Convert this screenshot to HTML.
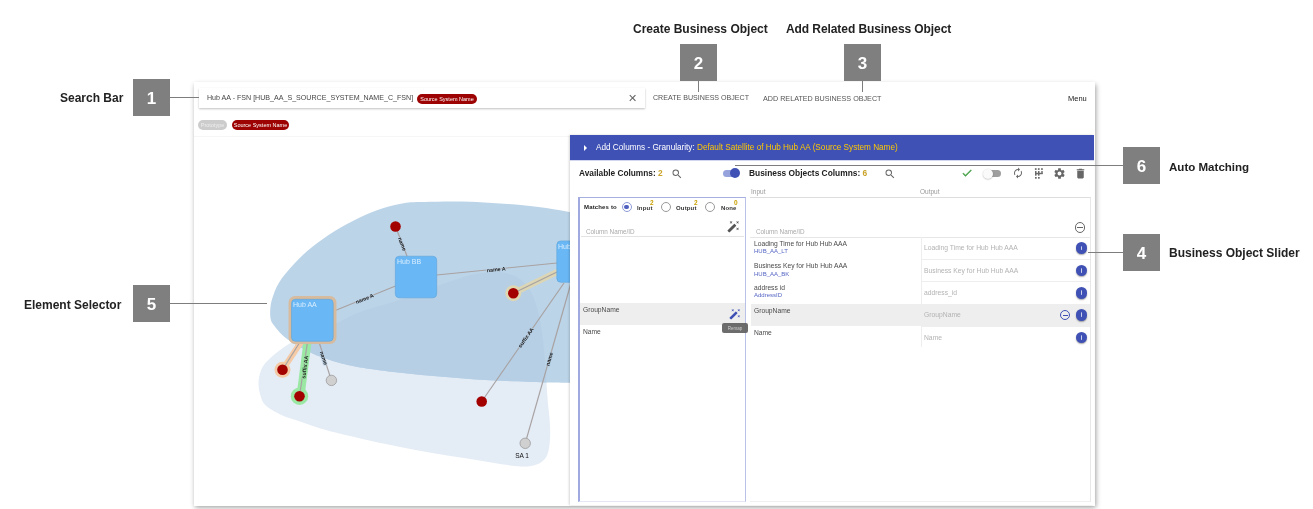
<!DOCTYPE html>
<html><head><meta charset="utf-8">
<style>
*{margin:0;padding:0;box-sizing:border-box}
html,body{width:1313px;height:509px;overflow:hidden;background:#fff;font-family:"Liberation Sans",sans-serif}
.a{position:absolute}
.lbl{position:absolute;will-change:transform;font-weight:bold;font-size:12px;color:#222;white-space:nowrap;line-height:14px}
.box{position:absolute;width:37px;height:37px;background:#7f7f7f;color:#fff;font-weight:bold;font-size:17px;line-height:39px;text-align:center;will-change:transform}
.hl{position:absolute;height:1px;background:#7d7d7d}
.vl{position:absolute;width:1px;background:#7d7d7d}
.t{position:absolute;white-space:nowrap;will-change:transform}
.dot{position:absolute;left:1076px;width:11.4px;height:11.4px;border-radius:50%;background:#3f51b5;box-shadow:0 1px 1.5px rgba(0,0,0,.35)}
.dot:after{content:"";position:absolute;left:5.2px;top:3.2px;width:0.9px;height:4.6px;background:rgba(255,255,255,.75);border-radius:.4px}
</style></head><body>

<!-- app frame -->
<div class="a" style="left:194px;top:82px;width:900.5px;height:423.5px;background:#fff;box-shadow:1px 1.5px 5px rgba(0,0,0,.38)"></div>

<!-- graph -->
<svg class="a" style="left:193px;top:81px;will-change:transform" width="901" height="424" viewBox="193 81 901 424">
<defs>
<clipPath id="dkc"><path d="M270.9,320.0 C270.2,317.4 270.0,314.2 270.2,310.7 C270.4,307.2 270.6,303.7 272.1,299.0 C273.6,294.3 275.6,288.2 279.1,282.5 C282.6,276.8 287.8,270.7 293.3,264.8 C298.8,258.9 305.0,252.8 312.1,247.1 C319.2,241.4 327.8,235.5 335.7,230.6 C343.6,225.7 351.4,221.4 359.3,217.7 C367.2,214.0 375.0,210.7 382.8,208.2 C390.6,205.7 399.4,203.9 406.4,202.8 C413.4,201.8 414.4,202.1 425.0,201.9 C435.6,201.7 452.5,201.1 470.0,201.8 C487.5,202.5 512.5,204.1 530.0,206.0 C547.5,207.9 560.0,210.3 575.0,213.0 C590.0,215.7 612.5,193.5 620.0,222.0 C627.5,250.5 627.5,357.1 620.0,384.0 C612.5,410.9 586.8,383.4 575.0,383.2 C563.2,382.9 559.8,382.8 549.4,382.5 C539.0,382.2 525.0,381.7 512.8,381.2 C500.6,380.7 488.2,380.2 476.0,379.4 C463.8,378.6 451.9,377.7 439.7,376.6 C427.5,375.5 415.2,374.4 403.0,373.0 C390.8,371.6 376.3,369.8 366.6,368.4 C356.9,366.9 353.3,366.5 345.0,364.3 C336.7,362.1 324.5,358.3 316.9,355.4 C309.3,352.4 303.6,349.0 299.2,346.6 C294.8,344.2 293.3,343.4 290.4,341.3 C287.4,339.2 284.1,336.8 281.5,334.2 C278.9,331.6 276.3,328.4 274.5,326.0 C272.7,323.6 271.6,322.6 270.9,320.0 Z"/></clipPath>
</defs>
<path d="M258.6,380.4 C258.2,385.0 259.0,390.4 260.2,394.6 C261.4,398.8 262.2,402.2 265.7,405.6 C269.2,409.0 276.1,412.5 281.4,415.0 C286.6,417.5 291.9,418.7 297.2,420.5 C302.4,422.3 307.7,424.3 312.9,426.0 C318.1,427.7 322.4,429.1 328.6,430.8 C334.8,432.5 340.9,433.9 350.0,436.0 C359.1,438.1 372.3,441.2 383.5,443.6 C394.7,446.0 405.8,448.2 417.0,450.3 C428.2,452.4 439.3,454.3 450.5,456.1 C461.7,457.9 472.8,459.5 484.0,461.2 C495.2,462.9 509.2,465.5 517.6,466.2 C526.0,466.9 529.8,466.4 534.3,465.3 C538.8,464.2 542.0,462.0 544.4,459.5 C546.8,457.0 547.6,454.6 548.6,450.3 C549.6,446.0 550.1,439.1 550.2,433.5 C550.3,427.9 549.8,422.4 549.4,416.8 C549.0,411.2 548.5,410.3 547.7,400.0 C546.9,389.7 545.5,366.8 544.5,355.0 C543.5,343.2 542.8,336.5 541.7,329.3 C540.6,322.1 539.6,317.5 538.0,311.6 C536.4,305.7 534.5,299.0 532.0,294.0 C529.5,289.0 526.5,284.8 523.0,281.5 C519.5,278.2 515.7,276.1 510.7,274.5 C505.7,272.9 500.4,271.5 493.0,271.8 C485.6,272.1 475.3,274.0 466.5,276.2 C457.7,278.4 451.8,280.9 440.0,285.0 C428.2,289.1 409.3,296.5 396.0,301.0 C382.7,305.5 370.5,308.0 360.0,312.0 C349.5,316.0 343.8,320.2 333.0,325.0 C322.2,329.8 303.6,337.0 295.0,341.0 C286.4,345.0 285.6,346.2 281.5,349.0 C277.4,351.8 273.5,355.0 270.4,358.0 C267.2,361.0 264.6,363.3 262.6,367.0 C260.6,370.7 259.0,375.8 258.6,380.4 Z" fill="#e4ecf6"/>
<path d="M270.9,320.0 C270.2,317.4 270.0,314.2 270.2,310.7 C270.4,307.2 270.6,303.7 272.1,299.0 C273.6,294.3 275.6,288.2 279.1,282.5 C282.6,276.8 287.8,270.7 293.3,264.8 C298.8,258.9 305.0,252.8 312.1,247.1 C319.2,241.4 327.8,235.5 335.7,230.6 C343.6,225.7 351.4,221.4 359.3,217.7 C367.2,214.0 375.0,210.7 382.8,208.2 C390.6,205.7 399.4,203.9 406.4,202.8 C413.4,201.8 414.4,202.1 425.0,201.9 C435.6,201.7 452.5,201.1 470.0,201.8 C487.5,202.5 512.5,204.1 530.0,206.0 C547.5,207.9 560.0,210.3 575.0,213.0 C590.0,215.7 612.5,193.5 620.0,222.0 C627.5,250.5 627.5,357.1 620.0,384.0 C612.5,410.9 586.8,383.4 575.0,383.2 C563.2,382.9 559.8,382.8 549.4,382.5 C539.0,382.2 525.0,381.7 512.8,381.2 C500.6,380.7 488.2,380.2 476.0,379.4 C463.8,378.6 451.9,377.7 439.7,376.6 C427.5,375.5 415.2,374.4 403.0,373.0 C390.8,371.6 376.3,369.8 366.6,368.4 C356.9,366.9 353.3,366.5 345.0,364.3 C336.7,362.1 324.5,358.3 316.9,355.4 C309.3,352.4 303.6,349.0 299.2,346.6 C294.8,344.2 293.3,343.4 290.4,341.3 C287.4,339.2 284.1,336.8 281.5,334.2 C278.9,331.6 276.3,328.4 274.5,326.0 C272.7,323.6 271.6,322.6 270.9,320.0 Z" fill="#bcd4e8"/>
<path clip-path="url(#dkc)" d="M258.6,380.4 C258.2,385.0 259.0,390.4 260.2,394.6 C261.4,398.8 262.2,402.2 265.7,405.6 C269.2,409.0 276.1,412.5 281.4,415.0 C286.6,417.5 291.9,418.7 297.2,420.5 C302.4,422.3 307.7,424.3 312.9,426.0 C318.1,427.7 322.4,429.1 328.6,430.8 C334.8,432.5 340.9,433.9 350.0,436.0 C359.1,438.1 372.3,441.2 383.5,443.6 C394.7,446.0 405.8,448.2 417.0,450.3 C428.2,452.4 439.3,454.3 450.5,456.1 C461.7,457.9 472.8,459.5 484.0,461.2 C495.2,462.9 509.2,465.5 517.6,466.2 C526.0,466.9 529.8,466.4 534.3,465.3 C538.8,464.2 542.0,462.0 544.4,459.5 C546.8,457.0 547.6,454.6 548.6,450.3 C549.6,446.0 550.1,439.1 550.2,433.5 C550.3,427.9 549.8,422.4 549.4,416.8 C549.0,411.2 548.5,410.3 547.7,400.0 C546.9,389.7 545.5,366.8 544.5,355.0 C543.5,343.2 542.8,336.5 541.7,329.3 C540.6,322.1 539.6,317.5 538.0,311.6 C536.4,305.7 534.5,299.0 532.0,294.0 C529.5,289.0 526.5,284.8 523.0,281.5 C519.5,278.2 515.7,276.1 510.7,274.5 C505.7,272.9 500.4,271.5 493.0,271.8 C485.6,272.1 475.3,274.0 466.5,276.2 C457.7,278.4 451.8,280.9 440.0,285.0 C428.2,289.1 409.3,296.5 396.0,301.0 C382.7,305.5 370.5,308.0 360.0,312.0 C349.5,316.0 343.8,320.2 333.0,325.0 C322.2,329.8 303.6,337.0 295.0,341.0 C286.4,345.0 285.6,346.2 281.5,349.0 C277.4,351.8 273.5,355.0 270.4,358.0 C267.2,361.0 264.6,363.3 262.6,367.0 C260.6,370.7 259.0,375.8 258.6,380.4 Z" fill="#b6cfe5"/>
<!-- halos -->
<line x1="301" y1="342" x2="282.5" y2="369.8" stroke="#f5caa6" stroke-width="6" stroke-linecap="round"/>
<circle cx="282.5" cy="369.8" r="8" fill="#f3c9a6"/>
<line x1="307.5" y1="342" x2="300.5" y2="396" stroke="#9ae8a4" stroke-width="8"/>
<circle cx="299.5" cy="396.2" r="8.7" fill="#9ae8a4"/>
<line x1="557" y1="272" x2="513.3" y2="293.2" stroke="#dcd6b4" stroke-width="6" stroke-linecap="round"/>
<circle cx="513.3" cy="293.2" r="8" fill="#ded7b2"/>
<!-- edges -->
<g stroke="#a8a2a2" stroke-width="1.2" fill="none">
<line x1="395.5" y1="226.5" x2="407" y2="256"/>
<line x1="334" y1="311" x2="395.5" y2="286"/>
<line x1="436.7" y1="275" x2="557" y2="263"/>
<line x1="557" y1="272" x2="513.3" y2="293.2"/>
<line x1="564" y1="283" x2="481.7" y2="401.5"/>
<line x1="571" y1="283" x2="525.2" y2="443.3"/>
<line x1="300" y1="342" x2="282.5" y2="369.8"/>
<line x1="307.5" y1="342" x2="299.5" y2="396"/>
<line x1="319" y1="342" x2="331.4" y2="380.4"/>
</g>
<!-- hubs -->
<rect x="288.5" y="296" width="48" height="48" rx="6.5" fill="#d6bb9f"/>
<rect x="291.5" y="299.3" width="41.7" height="42" rx="4" fill="#69b8f5" stroke="#5da3da" stroke-width="0.6"/>
<rect x="395.3" y="256.2" width="41.4" height="41.6" rx="4" fill="#69b8f5" stroke="#5da3da" stroke-width="0.6"/>
<rect x="556.8" y="240.9" width="41.4" height="41.4" rx="4" fill="#69b8f5" stroke="#5da3da" stroke-width="0.6"/>
<g font-family="Liberation Sans" font-size="7" fill="#eef6ff" fill-opacity="0.85">
<text x="293" y="307">Hub AA</text>
<text x="397" y="264">Hub BB</text>
<text x="558" y="249">Hub</text>
</g>
<!-- nodes -->
<g fill="#a30000">
<circle cx="395.5" cy="226.5" r="5.3"/>
<circle cx="513.3" cy="293.2" r="5.3"/>
<circle cx="282.5" cy="369.8" r="5.3"/>
<circle cx="299.5" cy="396.2" r="5.3"/>
<circle cx="481.7" cy="401.5" r="5.3"/>
</g>
<g fill="#d0d0d0" stroke="#9a9a9a" stroke-width="0.8">
<circle cx="331.4" cy="380.4" r="5.2"/>
<circle cx="525.2" cy="443.3" r="5.2"/>
</g>
<g font-family="Liberation Sans" font-size="5.3" font-weight="bold" fill="#1a1a1a" text-anchor="middle" dominant-baseline="central" stroke-width="2" stroke-opacity="0.6" paint-order="stroke" stroke-linejoin="round">
<text stroke="#bcd4e8" transform="translate(402.3,244) rotate(68.7)">name</text>
<text stroke="#bcd4e8" transform="translate(364.6,298.6) rotate(-22.1)">name A</text>
<text stroke="#bcd4e8" transform="translate(496.2,269.3) rotate(-5.7)">name A</text>
<text stroke="#b6cfe5" transform="translate(525.8,337.6) rotate(-55.2)">suffix AA</text>
<text stroke="#b6cfe5" transform="translate(549.2,359) rotate(-74)">name</text>
<text stroke="#b6cfe5" transform="translate(323.9,358) rotate(72)">name</text>
<text stroke="#9ae8a4" transform="translate(304.8,367) rotate(-82.6)">suffix AA</text>
</g>
<text x="522" y="457.5" font-family="Liberation Sans" font-size="6.5" fill="#111" text-anchor="middle">SA 1</text>
</svg>

<!-- search bar -->
<div class="a" style="left:199px;top:87.5px;width:446px;height:20.5px;background:#fff;box-shadow:0 1px 2px rgba(0,0,0,.25)"></div>
<div class="a" style="left:194px;top:135.5px;width:376px;height:1px;background:#f6f6f6"></div>
<div class="t" style="left:207px;top:92.8px;font-size:7.1px;color:#474747;line-height:10px">Hub AA - FSN [HUB_AA_S_SOURCE_SYSTEM_NAME_C_FSN]</div>
<div class="t" style="left:417px;top:94px;width:60px;height:10px;border-radius:5px;background:#9d0303;color:#fff;font-size:5.5px;line-height:10px;text-align:center">Source System Name</div>
<div class="t" style="left:628px;top:92px;font-size:11px;color:#666;line-height:12px">&#x2715;</div>
<div class="t" style="left:653px;top:94px;font-size:7.1px;color:#555;line-height:9px">CREATE BUSINESS OBJECT</div>
<div class="t" style="left:763px;top:94px;font-size:7.2px;color:#555;line-height:9px">ADD RELATED BUSINESS OBJECT</div>
<div class="t" style="left:1068px;top:93.5px;font-size:7.5px;color:#222;line-height:9px">Menu</div>
<div class="t" style="left:198px;top:120px;width:29px;height:10px;border-radius:5px;background:#ccc;color:#eee;font-size:5.5px;line-height:10px;text-align:center">Prototype</div>
<div class="t" style="left:232px;top:120px;width:57px;height:10px;border-radius:5px;background:#9d0303;color:#fff;font-size:5.5px;line-height:10px;text-align:center">Source System Name</div>

<!-- dialog -->
<div class="a" style="left:570px;top:135px;width:524px;height:370px;background:#fff;box-shadow:-1px 0 2px rgba(0,0,0,.16)"></div>
<div class="a" style="left:570px;top:135px;width:524px;height:25px;background:#3f51b5"></div>
<div class="a" style="left:570px;top:160px;width:524px;height:1px;background:#d3d7ee"></div>
<div class="a" style="left:584px;top:145px;width:0;height:0;border-left:3px solid #fff;border-top:3px solid transparent;border-bottom:3px solid transparent"></div>
<div class="t" style="left:595.5px;top:142px;font-size:8.2px;color:#fff;line-height:11px">Add Columns - Granularity: <span style="color:#ffc800">Default Satellite of Hub Hub AA (Source System Name)</span></div>

<!-- toolbar -->
<div class="t" style="left:578.7px;top:168px;font-size:8.3px;font-weight:bold;color:#222;line-height:11px">Available Columns: <span style="color:#c9a227">2</span></div>
<svg class="a" style="left:671px;top:168px" width="12" height="12" viewBox="0 0 24 24"><path fill="#666" d="M15.5 14h-.79l-.28-.27A6.47 6.47 0 0 0 16 9.5 6.5 6.5 0 1 0 9.5 16c1.61 0 3.09-.59 4.23-1.57l.27.28v.79l5 4.99L20.49 19l-4.99-5zm-6 0C7.01 14 5 11.99 5 9.5S7.01 5 9.5 5 14 7.01 14 9.5 11.99 14 9.5 14z"/></svg>
<div class="a" style="left:722.6px;top:169.6px;width:16px;height:7.3px;border-radius:3.7px;background:#96a2dc"></div>
<div class="a" style="left:730px;top:168px;width:10.4px;height:10.4px;border-radius:50%;background:#3f51b5"></div>
<div class="t" style="left:749px;top:168px;font-size:8.4px;font-weight:bold;color:#222;line-height:11px">Business Objects Columns: <span style="color:#c9a227">6</span></div>
<svg class="a" style="left:884px;top:168px" width="12" height="12" viewBox="0 0 24 24"><path fill="#666" d="M15.5 14h-.79l-.28-.27A6.47 6.47 0 0 0 16 9.5 6.5 6.5 0 1 0 9.5 16c1.61 0 3.09-.59 4.23-1.57l.27.28v.79l5 4.99L20.49 19l-4.99-5zm-6 0C7.01 14 5 11.99 5 9.5S7.01 5 9.5 5 14 7.01 14 9.5 11.99 14 9.5 14z"/></svg>
<svg class="a" style="left:961px;top:167px" width="12" height="12" viewBox="0 0 24 24"><path fill="#43a047" stroke="#43a047" stroke-width="0.8" d="M9 16.17L4.83 12l-1.42 1.41L9 19 21 7l-1.41-1.41z"/></svg>
<div class="a" style="left:984px;top:170px;width:17px;height:7px;border-radius:3.5px;background:#9e9e9e"></div>
<div class="a" style="left:982.5px;top:168.5px;width:10px;height:10px;border-radius:50%;background:#fafafa;box-shadow:0 0.5px 1.5px rgba(0,0,0,.3)"></div>
<svg class="a" style="left:1012px;top:167px" width="12" height="12" viewBox="0 0 24 24"><path fill="#666" d="M12 6v3l4-4-4-4v3c-4.42 0-8 3.58-8 8 0 1.57.46 3.03 1.24 4.26L6.7 14.8c-.45-.83-.7-1.79-.7-2.8 0-3.31 2.69-6 6-6zm6.76 1.74L17.3 9.2c.44.84.7 1.790.7 2.8 0 3.31-2.69 6-6 6v-3l-4 4 4 4v-3c4.42 0 8-3.58 8-8 0-1.57-.46-3.03-1.24-4.26z"/></svg>
<svg class="a" style="left:1030px;top:164px" width="18" height="18" viewBox="1030 164 18 18"><g fill="#6a6a6a"><rect x="1034.9" y="168.2" width="1.7" height="1.7"/><rect x="1037.9" y="168.2" width="1.7" height="1.7"/><rect x="1041.1" y="168.2" width="1.7" height="1.7"/><rect x="1035" y="171" width="1.5" height="4.7"/><rect x="1038" y="171" width="1.5" height="4.7"/><rect x="1035" y="172.8" width="4.5" height="1.5"/><rect x="1041.3" y="171" width="1.4" height="2.8"/><rect x="1038" y="172.8" width="4.7" height="1.4"/><rect x="1035" y="177" width="1.7" height="1.7"/><rect x="1038" y="177" width="1.7" height="1.7"/></g></svg>
<svg class="a" style="left:1053px;top:167px" width="13" height="13" viewBox="0 0 24 24"><path fill="#666" d="M19.14 12.94c.04-.3.06-.61.06-.94 0-.32-.02-.64-.07-.94l2.03-1.58a.49.49 0 0 0 .12-.61l-1.92-3.32a.488.488 0 0 0-.59-.22l-2.39.96c-.5-.38-1.03-.7-1.62-.94l-.36-2.54a.484.484 0 0 0-.48-.41h-3.84c-.24 0-.43.17-.47.41l-.36 2.54c-.59.24-1.13.57-1.62.94l-2.39-.96c-.22-.08-.47 0-.59.22L2.74 8.87c-.12.21-.08.47.12.61l2.03 1.58c-.05.3-.09.63-.09.94s.02.64.07.94l-2.03 1.58a.49.49 0 0 0-.12.61l1.92 3.32c.12.22.37.29.59.22l2.39-.96c.5.38 1.03.7 1.62.94l.36 2.54c.05.24.24.41.48.41h3.84c.24 0 .44-.17.47-.41l.36-2.54c.59-.24 1.13-.56 1.62-.94l2.39.96c.22.08.47 0 .59-.22l1.92-3.32c.12-.22.07-.47-.12-.61l-2.01-1.58zM12 15.6c-1.98 0-3.6-1.62-3.6-3.6s1.62-3.6 3.6-3.6 3.6 1.62 3.6 3.6-1.62 3.6-3.6 3.6z"/></svg>
<svg class="a" style="left:1074px;top:167px" width="13" height="13" viewBox="0 0 24 24"><path fill="#666" d="M6 19c0 1.1.9 2 2 2h8c1.1 0 2-.9 2-2V7H6v12zM19 4h-3.5l-1-1h-5l-1 1H5v2h14V4z"/></svg>

<!-- left panel -->
<div class="a" style="left:578px;top:197px;width:168px;height:305px;border:1px solid #a4afe0;border-right-color:#b9c1e8;border-left:2px solid #a0aae0;border-bottom-color:#e4e7f5;border-radius:0"></div>
<div class="t" style="left:583.8px;top:203px;font-size:6px;font-weight:bold;color:#222;line-height:8px;letter-spacing:0.15px">Matches to</div>
<div class="a" style="left:621.5px;top:201.7px;width:10.3px;height:10.3px;border-radius:50%;border:1px solid #8e9bd8"></div>
<div class="a" style="left:624.3px;top:204.5px;width:4.8px;height:4.8px;border-radius:50%;background:#4f5fc0"></div>
<div class="t" style="left:637.3px;top:203.5px;font-size:6px;font-weight:bold;color:#333;line-height:8px;letter-spacing:0.2px">Input</div>
<div class="t" style="left:649.5px;top:198.5px;font-size:6.5px;font-weight:bold;color:#c9a000;line-height:7px">2</div>
<div class="a" style="left:660.6px;top:201.7px;width:10.3px;height:10.3px;border-radius:50%;border:1.2px solid #999"></div>
<div class="t" style="left:676.4px;top:203.5px;font-size:6px;font-weight:bold;color:#333;line-height:8px;letter-spacing:0.15px">Output</div>
<div class="t" style="left:694px;top:198.5px;font-size:6.5px;font-weight:bold;color:#c9a000;line-height:7px">2</div>
<div class="a" style="left:704.8px;top:201.7px;width:10.3px;height:10.3px;border-radius:50%;border:1.2px solid #999"></div>
<div class="t" style="left:721px;top:203.5px;font-size:6px;font-weight:bold;color:#333;line-height:8px;letter-spacing:0.1px">None</div>
<div class="t" style="left:733.5px;top:198.5px;font-size:6.5px;font-weight:bold;color:#c9a000;line-height:7px">0</div>
<svg class="a" style="left:727px;top:220px" width="13" height="13" viewBox="0 0 24 24"><path fill="#555" d="M7.5 5.6L10 7 8.6 4.5 10 2 7.5 3.4 5 2l1.4 2.5L5 7zm12 9.8L17 14l1.4 2.5L17 19l2.5-1.4L22 19l-1.4-2.5L22 14zM22 2l-2.5 1.4L17 2l1.4 2.5L17 7l2.5-1.4L22 7l-1.4-2.5zm-7.63 5.29a.996.996 0 0 0-1.41 0L1.29 18.96a.996.996 0 0 0 0 1.41l2.34 2.34c.39.39 1.02.39 1.41 0L16.7 11.05a.996.996 0 0 0 0-1.41l-2.33-2.35z"/></svg>
<div class="t" style="left:585.5px;top:228px;font-size:6.35px;color:#aaa;line-height:8px">Column Name/ID</div>
<div class="a" style="left:581px;top:236px;width:163px;height:1px;background:#e3e3e3"></div>
<div class="a" style="left:580px;top:303px;width:165px;height:22px;background:#eee"></div>
<div class="t" style="left:583px;top:306px;font-size:6.7px;color:#4a4a4a;line-height:8px">GroupName</div>
<svg class="a" style="left:729px;top:308px" width="12" height="12" viewBox="0 0 24 24"><path fill="#3f51b5" d="M7.5 5.6L10 7 8.6 4.5 10 2 7.5 3.4 5 2l1.4 2.5L5 7zm12 9.8L17 14l1.4 2.5L17 19l2.5-1.4L22 19l-1.4-2.5L22 14zM22 2l-2.5 1.4L17 2l1.4 2.5L17 7l2.5-1.4L22 7l-1.4-2.5zm-7.63 5.29a.996.996 0 0 0-1.41 0L1.29 18.96a.996.996 0 0 0 0 1.41l2.34 2.34c.39.39 1.02.39 1.41 0L16.7 11.05a.996.996 0 0 0 0-1.41l-2.33-2.35z"/></svg>
<div class="t" style="left:583px;top:328px;font-size:6.7px;color:#4a4a4a;line-height:8px">Name</div>

<!-- right panel -->
<div class="t" style="left:751px;top:188px;font-size:6.5px;color:#999;line-height:8px">Input</div>
<div class="t" style="left:920px;top:188px;font-size:6.5px;color:#999;line-height:8px">Output</div>
<div class="a" style="left:749.5px;top:197px;width:341.5px;height:305px;border-top:1px solid #ddd;border-right:1px solid #e8e8e8;border-bottom:1px solid #f0f0f0"></div>
<div class="a" style="left:1074.5px;top:222px;width:10.5px;height:10.5px;border-radius:50%;border:1.1px solid #666"></div>
<div class="a" style="left:1077px;top:226.8px;width:5.5px;height:1.1px;background:#666"></div>
<div class="t" style="left:756px;top:228px;font-size:6.35px;color:#aaa;line-height:8px">Column Name/ID</div>
<div class="a" style="left:750px;top:237px;width:340px;height:1px;background:#e6e6e6"></div>
<div class="a" style="left:751px;top:303.5px;width:339px;height:22px;background:#eee"></div>
<div class="a" style="left:920.5px;top:237px;width:1px;height:110px;background:#eee"></div>
<div class="a" style="left:921px;top:258.8px;width:169px;height:1px;background:#eee"></div>
<div class="a" style="left:921px;top:281.2px;width:169px;height:1px;background:#eee"></div>
<div class="a" style="left:921px;top:303.5px;width:169px;height:1px;background:#eee"></div>
<div class="a" style="left:921px;top:325.5px;width:169px;height:1px;background:#eee"></div>
<div class="t" style="left:754px;top:239.5px;font-size:6.7px;color:#4a4a4a;line-height:8px">Loading Time for Hub Hub AAA</div>
<div class="t" style="left:754px;top:246.5px;font-size:6px;color:#5565c4;line-height:8px">HUB_AA_LT</div>
<div class="t" style="left:754px;top:262px;font-size:6.7px;color:#4a4a4a;line-height:8px">Business Key for Hub Hub AAA</div>
<div class="t" style="left:754px;top:269.5px;font-size:6px;color:#5565c4;line-height:8px">HUB_AA_BK</div>
<div class="t" style="left:754px;top:284px;font-size:6.7px;color:#4a4a4a;line-height:8px">address id</div>
<div class="t" style="left:754px;top:291px;font-size:6px;color:#5565c4;line-height:8px">AddressID</div>
<div class="t" style="left:754px;top:306.5px;font-size:6.7px;color:#4a4a4a;line-height:8px">GroupName</div>
<div class="t" style="left:754px;top:328.5px;font-size:6.7px;color:#4a4a4a;line-height:8px">Name</div>
<div class="t" style="left:924px;top:244px;font-size:6.75px;color:#b3b3b3;line-height:8px">Loading Time for Hub Hub AAA</div>
<div class="t" style="left:924px;top:266.5px;font-size:6.75px;color:#b3b3b3;line-height:8px">Business Key for Hub Hub AAA</div>
<div class="t" style="left:924px;top:289px;font-size:6.75px;color:#b3b3b3;line-height:8px">address_id</div>
<div class="t" style="left:924px;top:311px;font-size:6.75px;color:#b3b3b3;line-height:8px">GroupName</div>
<div class="t" style="left:924px;top:333.5px;font-size:6.75px;color:#b3b3b3;line-height:8px">Name</div>
<div class="a" style="left:1059.8px;top:309.8px;width:10.5px;height:10.5px;border-radius:50%;border:1.1px solid #3f51b5"></div>
<div class="a" style="left:1062.5px;top:314.5px;width:5.2px;height:1.1px;background:#3f51b5"></div>
<div class="dot" style="top:242.4px"></div>
<div class="dot" style="top:264.8px"></div>
<div class="dot" style="top:287.3px"></div>
<div class="dot" style="top:309.3px"></div>
<div class="dot" style="top:331.8px"></div>
<!-- tooltip -->
<div class="t" style="left:722.3px;top:323.4px;width:26px;height:10.4px;border-radius:2px;background:rgba(97,97,97,.93);color:#cfcfcf;font-size:4.5px;line-height:11px;text-align:center">Remap</div>

<!-- callouts -->
<div class="lbl" style="left:60px;top:91px">Search Bar</div>
<div class="box" style="left:133px;top:79px">1</div>
<div class="hl" style="left:170px;top:97px;width:29px"></div>

<div class="lbl" style="left:633px;top:21.5px">Create Business Object</div>
<div class="box" style="left:680px;top:44px">2</div>
<div class="vl" style="left:698px;top:81px;height:10.5px"></div>

<div class="lbl" style="left:786px;top:21.5px;letter-spacing:-0.08px">Add Related Business Object</div>
<div class="box" style="left:844px;top:44px">3</div>
<div class="vl" style="left:861.5px;top:81px;height:10.5px"></div>

<div class="lbl" style="left:1169px;top:160px;font-size:11.55px">Auto Matching</div>
<div class="box" style="left:1123px;top:147px">6</div>
<div class="hl" style="left:735px;top:165px;width:388px"></div>

<div class="lbl" style="left:1169px;top:246px">Business Object Slider</div>
<div class="box" style="left:1123px;top:234px">4</div>
<div class="hl" style="left:1088px;top:252px;width:35px"></div>

<div class="lbl" style="left:24px;top:298px">Element Selector</div>
<div class="box" style="left:133px;top:285px">5</div>
<div class="hl" style="left:170px;top:303px;width:97px"></div>

</body></html>
